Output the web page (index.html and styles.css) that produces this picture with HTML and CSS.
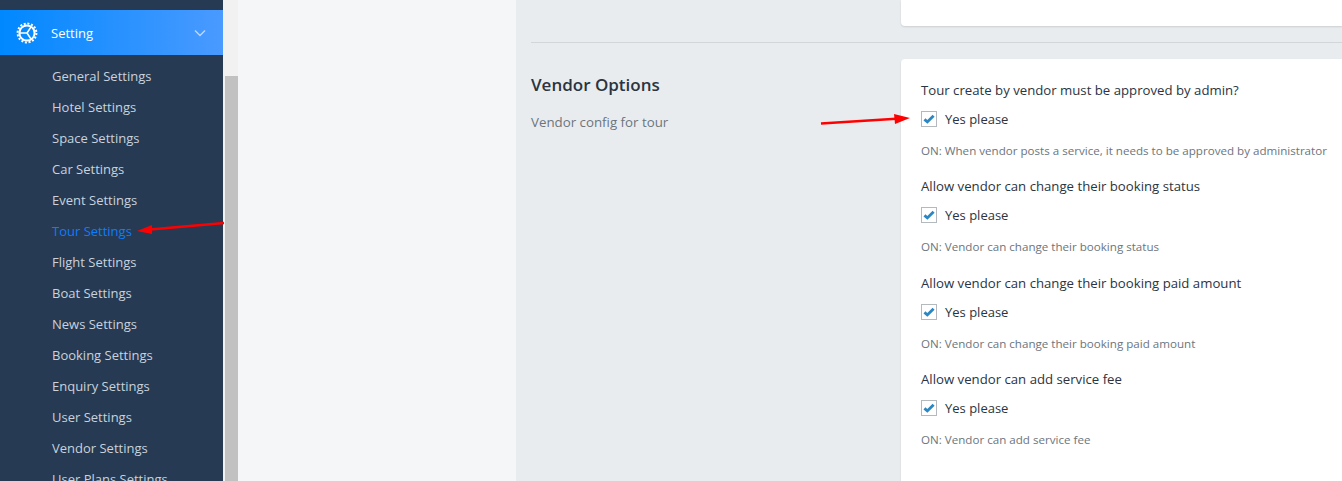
FILE: index.html
```html
<!DOCTYPE html>
<html lang="en">
<head>
<meta charset="UTF-8">
<meta name="viewport" content="width=device-width, initial-scale=1.0">
<title>Tour Settings</title>
<link rel="stylesheet" href="styles.css">
</head>
<body>

<div class="page">
    <!-- SIDEBAR -->
    <aside class="sidebar">
        <div class="menu-active">
            <svg class="gear" viewBox="0 0 22 22" width="22" height="22">
                <circle cx="11" cy="11" r="9.4" fill="none" stroke="#fff" stroke-width="2" stroke-dasharray="2 1.7"/>
                <circle cx="11" cy="11" r="7.6" fill="none" stroke="#fff" stroke-width="2"/>
                <path d="M11 11 L4 11 M11 11 L15 5 M11 11 L15 17" fill="none" stroke="#fff" stroke-width="1.5"/>
            </svg>
            <span class="menu-label">Setting</span>
            <svg class="chevron" viewBox="0 0 12 8" width="12" height="8">
                <path d="M1 1.5 L6 6.5 L11 1.5" fill="none" stroke="#b9d6fb" stroke-width="1.5"/>
            </svg>
        </div>
        <ul class="submenu">
            <li>General Settings</li>
            <li>Hotel Settings</li>
            <li>Space Settings</li>
            <li>Car Settings</li>
            <li>Event Settings</li>
            <li class="current">Tour Settings</li>
            <li>Flight Settings</li>
            <li>Boat Settings</li>
            <li>News Settings</li>
            <li>Booking Settings</li>
            <li>Enquiry Settings</li>
            <li>User Settings</li>
            <li>Vendor Settings</li>
            <li>User Plans Settings</li>
        </ul>
    </aside>

    <div class="scrollbar"><div class="scroll-thumb"></div></div>

    <div class="tabs-panel"></div>

    <!-- SETTINGS -->
    <main class="content">
        <div class="card card-top"></div>
        <hr class="divider">
        <section class="group">
            <div class="group-info">
                <h3>Vendor Options</h3>
                <p>Vendor config for tour</p>
            </div>
            <div class="card card-options">
                <div class="option">
                    <label>Tour create by vendor must be approved by admin?</label>
                    <div class="check-row"><span class="checkbox"><svg viewBox="0 0 14 12" width="12" height="10"><path d="M1.5 6.5 L5 9.5 L12.5 2" fill="none" stroke="#2b87c3" stroke-width="3.4"/></svg></span>Yes please</div>
                    <small>ON: When vendor posts a service, it needs to be approved by administrator</small>
                </div>
                <div class="option">
                    <label>Allow vendor can change their booking status</label>
                    <div class="check-row"><span class="checkbox"><svg viewBox="0 0 14 12" width="12" height="10"><path d="M1.5 6.5 L5 9.5 L12.5 2" fill="none" stroke="#2b87c3" stroke-width="3.4"/></svg></span>Yes please</div>
                    <small>ON: Vendor can change their booking status</small>
                </div>
                <div class="option">
                    <label>Allow vendor can change their booking paid amount</label>
                    <div class="check-row"><span class="checkbox"><svg viewBox="0 0 14 12" width="12" height="10"><path d="M1.5 6.5 L5 9.5 L12.5 2" fill="none" stroke="#2b87c3" stroke-width="3.4"/></svg></span>Yes please</div>
                    <small>ON: Vendor can change their booking paid amount</small>
                </div>
                <div class="option">
                    <label>Allow vendor can add service fee</label>
                    <div class="check-row"><span class="checkbox"><svg viewBox="0 0 14 12" width="12" height="10"><path d="M1.5 6.5 L5 9.5 L12.5 2" fill="none" stroke="#2b87c3" stroke-width="3.4"/></svg></span>Yes please</div>
                    <small>ON: Vendor can add service fee</small>
                </div>
            </div>
        </section>
    </main>
</div>

<!-- red annotation arrows drawn on top of the screenshot -->
<svg class="arrows" viewBox="0 0 1342 481" width="1342" height="481">
    <path d="M224 223 L150 229.5" stroke="#f00" stroke-width="2.6" fill="none"/>
    <path d="M137 231 L152 225 L152 234 Z" fill="#f00"/>
    <path d="M821 123.5 L900 118.5" stroke="#f00" stroke-width="2.6" fill="none"/>
    <path d="M910 118 L894 114 L895 124 Z" fill="#f00"/>
</svg>

</body>
</html>
```

FILE: styles.css
```css
* { box-sizing: border-box; }
html, body {
    margin: 0;
    height: 481px;
    overflow: hidden;
}
body {
    font-family: "Open Sans", "Noto Sans", Arial, sans-serif;
    font-size: 13px;
    color: #2b3440;
    background: #f5f6f8;
}
.page {
    display: flex;
    height: 481px;
    overflow: hidden;
}

/* sidebar */
.sidebar {
    width: 223px;
    flex: none;
    padding-top: 10px;
    background: #263a53;
}
.menu-active {
    display: flex;
    align-items: center;
    height: 45px;
    padding: 0 17px 0 16px;
    color: #fff;
    background: linear-gradient(90deg, #0088ff, #4a9aff);
}
.menu-label { margin-left: 13px; flex: 1; }
.submenu {
    list-style: none;
    margin: 0;
    padding: 6px 0 0 52px;
    color: #c9d2dd;
}
.submenu li {
    height: 31px;
    line-height: 31px;
    white-space: nowrap;
}
.submenu .current { color: #0d7dfa; }

.scrollbar {
    width: 15px;
    flex: none;
    padding: 76px 0 0 2px;
    background: #f1f1f1;
}
.scroll-thumb { height: 100%; background: #c1c1c1; }

.tabs-panel {
    width: 278px;
    flex: none;
    background: #f5f6f8;
}

/* main settings column */
.content {
    flex: 1;
    min-width: 0;
    padding-left: 15px;
    background: #e9ecef;
}
.card {
    background: #fff;
    box-shadow: 0 1px 2px rgba(0,0,0,0.12);
}
.card-top {
    height: 26px;
    margin-left: 370px;
    border-radius: 0 0 0 4px;
}
.divider {
    height: 1px;
    margin: 16px 0 16px;
    border: none;
    background: #d2d6da;
}
.group { display: flex; }
.group-info { width: 370px; flex: none; }
.group-info h3 {
    margin: 13px 0 0;
    font-size: 17px;
    font-weight: 600;
    line-height: 26px;
    color: #2b3440;
}
.group-info p {
    margin: 14px 0 0;
    font-size: 13.3px;
    line-height: 20px;
    color: #6c757d;
}
.card-options {
    flex: 1;
    height: 440px;
    padding: 20px 0 0 20px;
    border-radius: 4px 0 0 4px;
}
.option { height: 96.4px; white-space: nowrap; }
.option label {
    display: block;
    height: 22px;
    font-size: 13.2px;
    line-height: 22px;
}
.check-row {
    display: flex;
    align-items: center;
    height: 16px;
    margin-top: 10px;
}
.checkbox {
    display: flex;
    align-items: center;
    justify-content: center;
    width: 16px;
    height: 16px;
    margin-right: 8px;
    border: 1px solid #b4b9be;
    background: #fff;
}
.option small {
    display: block;
    margin-top: 16px;
    font-size: 11.6px;
    line-height: 16px;
    color: #6c757d;
}

.arrows {
    position: absolute;
    top: 0;
    left: 0;
    pointer-events: none;
}
```
